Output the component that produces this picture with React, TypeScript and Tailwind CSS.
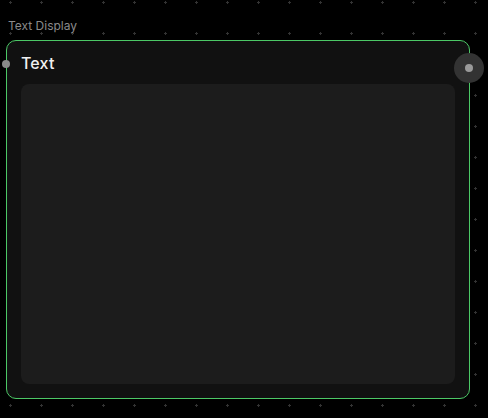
import React from "react";

const App = () => {
  return (
    <div
      className="w-[488px] h-[418px] overflow-hidden bg-black bg-[radial-gradient(circle,#333333_1px,transparent_1.2px)] bg-[size:31px_31px] bg-[position:-5px_-13px]"
      style={{ fontFamily: "Inter, 'Noto Sans', sans-serif" }}
    >
      <div className="pt-[18px] pl-[8px] text-[12px] leading-[16px] text-[#8a8a8a]">
        Text Display
      </div>
      <div className="relative mt-[6px] ml-[6px] w-[464px] h-[359px] rounded-[10px] border border-[#4cc866] bg-[#111111] px-[14px] pt-[10px] pb-[14px] flex flex-col">
        {/* input handle */}
        <div className="absolute left-[-5px] top-[19px] w-[8px] h-[8px] rounded-full bg-[#8a8a8a]" />
        {/* output handle */}
        <div className="absolute right-[-15px] top-[12px] w-[30px] h-[30px] rounded-full bg-[#333333] flex items-center justify-center">
          <div className="w-[8px] h-[8px] rounded-full bg-[#9a9a9a]" />
        </div>
        <h1 className="text-[16px] leading-[24px] font-medium tracking-[0.01em] text-[#f0f0f0]">
          Text
        </h1>
        <div className="mt-[9px] flex-1 rounded-[8px] bg-[#1c1c1c]" />
      </div>
    </div>
  );
};

export default App;
